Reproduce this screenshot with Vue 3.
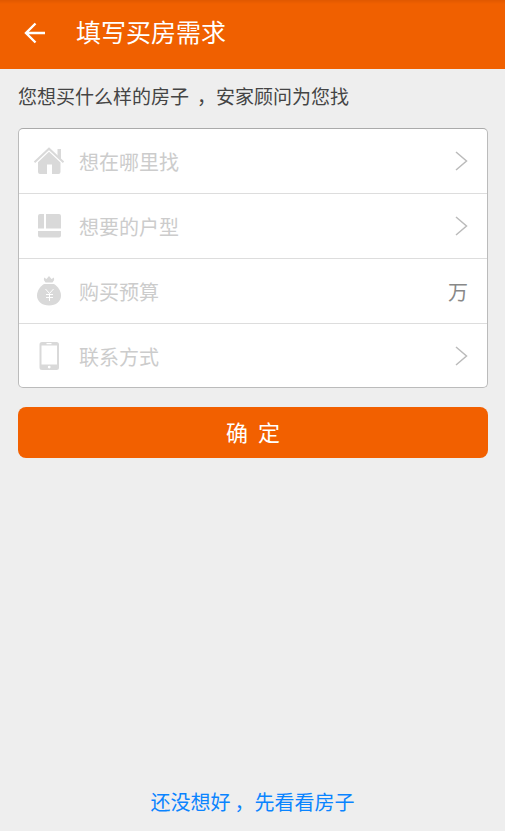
<script setup>
import { ref } from 'vue'

const budget = ref('')
</script>

<template>
  <div class="page">
    <header class="bar">
      <button class="back" type="button" aria-label="返回">
        <svg width="22" height="22" viewBox="0 0 22 22" fill="none" stroke="#fff" stroke-width="2.4">
          <path d="M21 11H2.5M11.5 1.5L2 11l9.5 9.5" />
        </svg>
      </button>
      <h1>填写买房需求</h1>
    </header>

    <main>
      <p class="intro">您想买什么样的房子<span class="comma wide">，</span>安家顾问为您找</p>

      <form @submit.prevent>
        <div class="card">
          <button class="row" type="button">
            <svg class="icon" viewBox="0 0 32 32" fill="#d9d9d9">
              <path d="M24.500 4H28v11l-3.500-3z" />
              <path d="M1.500 17.300L16 3.700l14.500 13.600" fill="none" stroke="#d9d9d9" stroke-width="2" />
              <path d="M16 6.700L27.500 17.500V27a2 2 0 0 1-2 2H19V19.500h-5V29H7a2 2 0 0 1-2-2v-9.800z" />
            </svg>
            <span class="label">想在哪里找</span>
            <svg class="chevron" viewBox="0 0 14 20"><path d="M2 1L12.500 10 2 19" /></svg>
          </button>

          <button class="row" type="button">
            <svg class="icon" viewBox="0 0 32 32" fill="#d9d9d9">
              <path d="M7 4h4v14.500H5V6a2 2 0 0 1 2-2zM13 4h13a2 2 0 0 1 2 2v12.500H13zM5 21h23v4.500a2 2 0 0 1-2 2H7a2 2 0 0 1-2-2z" />
            </svg>
            <span class="label">想要的户型</span>
            <svg class="chevron" viewBox="0 0 14 20"><path d="M2 1L12.500 10 2 19" /></svg>
          </button>

          <label class="row">
            <svg class="icon" viewBox="0 0 32 32" fill="#d9d9d9">
              <path d="M11 2.500l2.500 1.500L16 1l2.500 3L21 2.500q1 2.500-1.500 5h-7Q10 5 11 2.500z" />
              <path d="M11 9h10c4 2.500 7 7 7 11.500 0 6-5 10-12 10S4 26.500 4 20.500C4 16 7 11.500 11 9z" />
              <path d="M12.500 14l4 4.500 4-4.500M16.500 18.500V26M13 19.500h7M13 22.500h7" fill="none" stroke="#fff" stroke-width="1" />
            </svg>
            <input v-model="budget" class="label" type="text" inputmode="numeric" placeholder="购买预算" aria-label="购买预算（万）" />
            <span class="unit">万</span>
          </label>

          <button class="row" type="button">
            <svg class="icon" viewBox="0 0 32 32" fill="#d9d9d9" fill-rule="evenodd">
              <path d="M9 2h14.500a2.500 2.500 0 0 1 2.500 2.500v23a2.500 2.500 0 0 1-2.500 2.500H9a2.500 2.500 0 0 1-2.500-2.500v-23A2.500 2.500 0 0 1 9 2zM8.500 5.500v19H24v-19zM13.500 3v1.300h5V3zM16.200 25.700a1.400 1.400 0 1 0 0 2.800 1.400 1.400 0 0 0 0-2.800z" />
            </svg>
            <span class="label">联系方式</span>
            <svg class="chevron" viewBox="0 0 14 20"><path d="M2 1L12.500 10 2 19" /></svg>
          </button>
        </div>

        <button class="submit" type="submit">确&nbsp;&nbsp;定</button>
      </form>
    </main>

    <footer>
      <a href="#">还没想好<span class="comma">，</span>先看看房子</a>
    </footer>
  </div>
</template>

<style>
body {
  background: #eee;
}
</style>

<style scoped>
.page {
  box-sizing: border-box;
  display: flex;
  flex-direction: column;
  min-height: 100vh;
  background: #eee;
  font-family: "Noto Sans CJK SC", sans-serif;
}

button,
input {
  margin: 0;
  padding: 0;
  border: 0;
  background: none;
  font: inherit;
  cursor: pointer;
}

.bar {
  box-sizing: border-box;
  display: flex;
  align-items: center;
  height: 69px;
  padding: 0 24px 4px;
  gap: 30px;
  background: linear-gradient(#e05800, #f06000 4px);
}

.back {
  display: flex;
}

h1 {
  margin: 0;
  padding-bottom: 4px;
  color: #fff;
  font-size: 25px;
  font-weight: 400;
  line-height: 36px;
}

main {
  flex: 1;
  padding: 12px 17px 0 18px;
}

.intro {
  margin: 0 0 17px;
  color: #444;
  font-size: 19px;
  line-height: 30px;
}

.comma {
  margin-left: 4px;
}

.comma.wide {
  margin-left: 8px;
}

.card {
  border: 1px solid #bbb;
  border-top-color: #aaa;
  border-radius: 5px;
  background: #fff;
  overflow: hidden;
}

.row {
  box-sizing: border-box;
  display: flex;
  align-items: center;
  width: 100%;
  height: 65px;
  padding: 0 19px 0 14px;
  border-bottom: 1px solid #ddd;
  text-align: left;
}

.row:first-child {
  height: 65px;
}

.row:last-child {
  height: 63px;
  border-bottom: 0;
}

.icon {
  flex: none;
  width: 32px;
  height: 32px;
  margin-right: 14px;
}

.label {
  flex: 1;
  min-width: 0;
  padding-top: 2px;
  color: #ccc;
  font-size: 20px;
  line-height: 30px;
}

input.label {
  color: #444;
  outline: none;
  cursor: text;
}

input.label::placeholder {
  color: #ccc;
  opacity: 1;
}

.chevron {
  flex: none;
  width: 14px;
  height: 20px;
  fill: none;
  stroke: #bbb;
  stroke-width: 1.5;
}

.unit {
  padding-top: 2px;
  color: #888;
  font-size: 20px;
  line-height: 30px;
}

.submit {
  display: block;
  width: 100%;
  height: 51px;
  margin-top: 19px;
  padding-bottom: 3px;
  border-radius: 8px;
  background: #f26000;
  color: #fff;
  font-size: 22px;
}

footer {
  padding: 20px 0 14px;
  text-align: center;
}

footer a {
  color: #0a84ff;
  font-size: 20px;
  line-height: 30px;
  text-decoration: none;
}
</style>
